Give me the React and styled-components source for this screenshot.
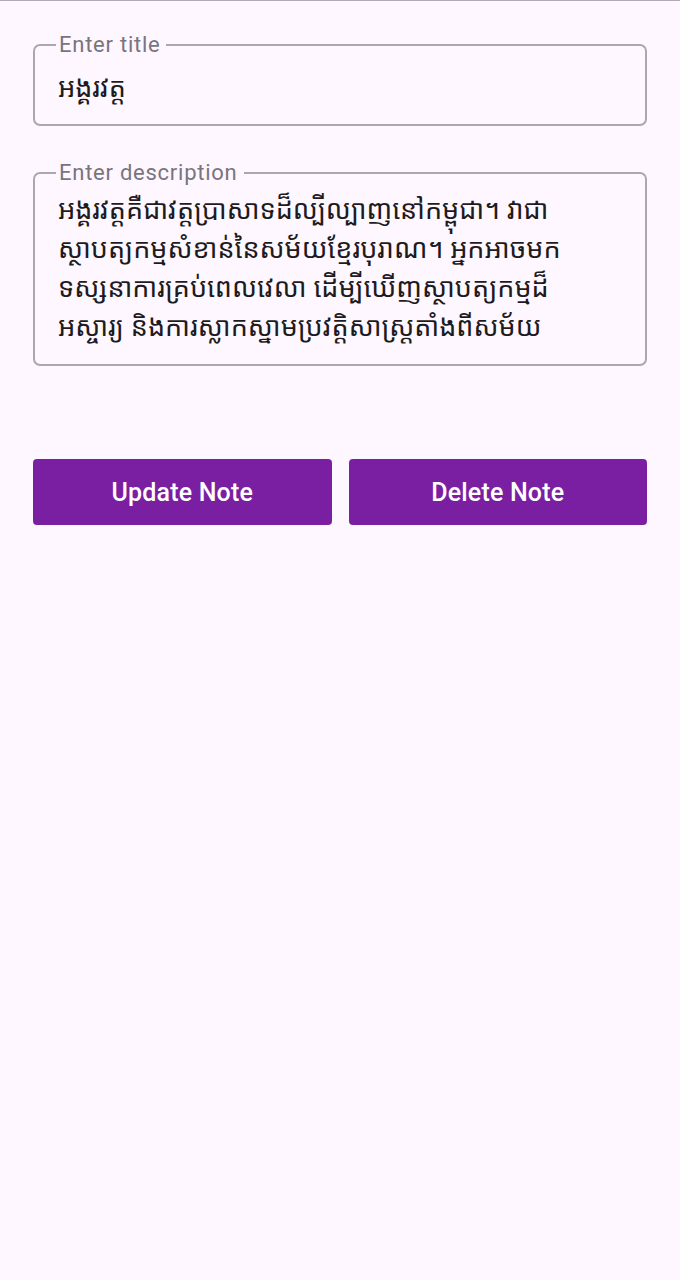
import React from 'react';
import styled, { createGlobalStyle } from 'styled-components';

const GlobalStyle = createGlobalStyle`
  *,
  *:before,
  *:after {
    margin: 0;
    padding: 0;
    box-sizing: border-box;
  }

  body {
    margin: 0;
    background: #fef7ff;
    font-family: Roboto, 'Noto Sans', sans-serif;
  }
`;

const Page = styled.div`
  min-height: 1280px;
  background: #fef7ff;
  border-top: 1px solid #b4aab9;
  padding: 33px 33px 0 33px;
  display: flex;
  flex-direction: column;
`;

const Field = styled.fieldset`
  border: 2px solid #aca7af;
  border-radius: 7px;
  padding: ${props => (props.multiline ? '0 36px 12px 23px' : '0 23px 0 23px')};
  height: ${props => props.height}px;
  margin-bottom: ${props => props.gap}px;
  min-width: 0;
`;

const Label = styled.legend`
  margin-left: -2px;
  padding: 0 6px 0 3px;
  font-family: Roboto, 'Noto Sans', sans-serif;
  font-size: 22px;
  letter-spacing: 0.75px;
  color: #79747e;
  line-height: 22px;
`;

const khmer = `'Noto Sans Khmer', 'Noto Serif Khmer', 'Khmer OS', 'DejaVu Sans', sans-serif`;

const TitleInput = styled.input`
  display: block;
  width: 100%;
  border: none;
  outline: none;
  background: transparent;
  font-family: ${khmer};
  font-size: 27px;
  color: #1d1b20;
  height: 50px;
  margin-top: 5px;
`;

const DescInput = styled.textarea`
  display: block;
  width: 100%;
  height: 160px;
  margin-top: 5px;
  border: none;
  outline: none;
  resize: none;
  overflow: hidden;
  background: transparent;
  font-family: ${khmer};
  font-size: 27px;
  line-height: 39px;
  color: #1d1b20;
`;

const Actions = styled.div`
  display: flex;
  gap: 17px;
`;

const Button = styled.button`
  flex: 1;
  height: 66px;
  border: none;
  border-radius: 4px;
  background: #7b1fa2;
  color: #ffffff;
  font-family: Roboto, 'Noto Sans', sans-serif;
  font-weight: 500;
  font-size: 25px;
  letter-spacing: 0.2px;
  cursor: pointer;
`;

const description =
  'អង្គរវត្តគឺជាវត្តប្រាសាទដ៏ល្បីល្បាញនៅកម្ពុជា។ វាជាស្ថាបត្យកម្មសំខាន់នៃសម័យខ្មែរបុរាណ។ អ្នកអាចមកទស្សនាការគ្រប់ពេលវេលា ដើម្បីឃើញស្ថាបត្យកម្មដ៏អស្ចារ្យ និងការស្លាកស្នាមប្រវត្តិសាស្ត្រតាំងពីសម័យ';

const App = () => (
  <React.Fragment>
    <GlobalStyle />
    <Page>
      <Field height={92} gap={36}>
        <Label>Enter title</Label>
        <TitleInput defaultValue="អង្គរវត្ត" />
      </Field>
      <Field multiline height={204} gap={93}>
        <Label>Enter description</Label>
        <DescInput defaultValue={description} />
      </Field>
      <Actions>
        <Button>Update Note</Button>
        <Button>Delete Note</Button>
      </Actions>
    </Page>
  </React.Fragment>
);

export default App;
